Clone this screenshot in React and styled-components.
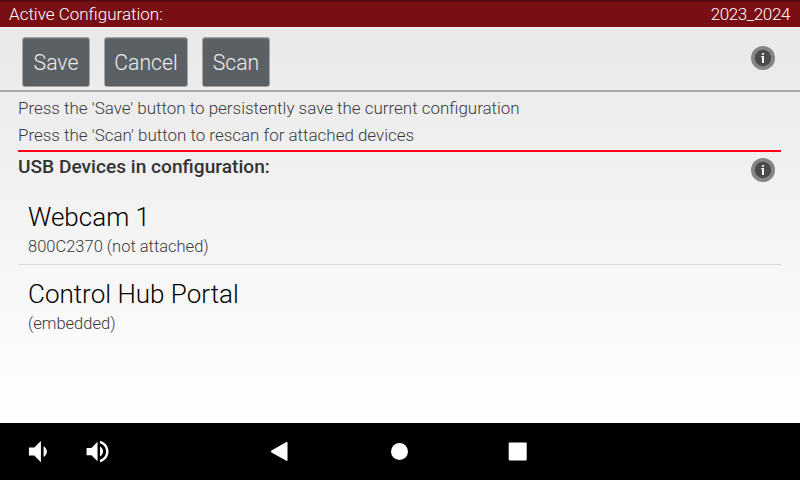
import React from "react";
import styled, { createGlobalStyle } from "styled-components";

const GlobalStyle = createGlobalStyle`
  * { box-sizing: border-box; }
  body { margin: 0; background: #000; }
  p, h1, h2, ul { margin: 0; padding: 0; font-weight: 300; }
`;

const Screen = styled.div`
  width: 800px;
  height: 480px;
  display: flex;
  flex-direction: column;
  overflow: hidden;
  font-family: Roboto, "Noto Sans", sans-serif;
  font-weight: 300;
  background: linear-gradient(#e7e7e7, #ffffff 423px);
`;

const Header = styled.header`
  height: 27px;
  flex: none;
  display: flex;
  justify-content: space-between;
  padding: 0 10px 0 9px;
  font-size: 17px;
  line-height: 28px;
  color: #fff;
  background: linear-gradient(#4d090e, #790e15 3px);
`;

const ConfigName = styled.span`
  letter-spacing: -0.38px;
`;

const Toolbar = styled.div`
  height: 65px;
  flex: none;
  display: flex;
  align-items: flex-start;
  gap: 14px;
  padding: 10px 25px 0 22px;
  border-bottom: 2px solid #a9a9a9;
`;

const Button = styled.button`
  width: ${(p) => p.$width}px;
  height: 50px;
  padding: 0;
  border: 1px solid #a4a6a7;
  border-radius: 3px;
  background: #5b6064;
  box-shadow: inset 0 1px #73787b, inset 0 -1px #54595c;
  color: #ececec;
  font: 300 21.2px Roboto, sans-serif;
`;

const InfoButton = styled.button`
  width: 24px;
  height: 24px;
  flex: none;
  margin: ${(p) => p.$top}px 0 0 auto;
  padding: 0;
  border: 0;
  background: none;
  svg { display: block; }
`;

const Content = styled.main`
  flex: 1;
  padding: 3px 19px 0 18px;
`;

const Hint = styled.p`
  height: 27px;
  font-size: 16.97px;
  line-height: 27px;
  color: #3a3a3a;
`;

const Section = styled.div`
  display: flex;
  margin-top: 1px;
  padding-right: 6px;
  border-top: 2px solid #ff0014;
`;

const SectionTitle = styled.h2`
  font-size: 19.15px;
  font-weight: 500;
  line-height: 30px;
  color: #333;
`;

const Devices = styled.ul`
  list-style: none;
  padding-top: 6px;
`;

const Device = styled.li`
  height: 76px;
  padding: 13px 10px 0;
  & + & { border-top: 1px solid #dadada; }
`;

const DeviceName = styled.div`
  font-size: 26px;
  line-height: 32px;
  color: #000;
`;

const DeviceDetail = styled.div`
  font-size: 16.5px;
  line-height: 28px;
  color: #3a3a3a;
`;

const NavBar = styled.nav`
  height: 57px;
  flex: none;
  display: flex;
  padding-left: 22px;
  background: #000;
`;

const NavButton = styled.button`
  width: ${(p) => p.$width}px;
  height: 57px;
  padding: 0;
  border: 0;
  background: none;
  svg { display: block; fill: #fff; }
`;

const Info = ({ top }) => (
  <InfoButton $top={top} aria-label="Info">
    <svg width="24" height="24" viewBox="0 0 24 24">
      <circle cx="12" cy="12" r="12" fill="#858585" />
      <circle cx="12" cy="12" r="8.2" fill="#4a4a4a" />
      <path d="M11 7h2v1.8h-2zM10.3 10h2.7v7h-2v-5.6h-.7z" fill="#fff" />
    </svg>
  </InfoButton>
);

const buttons = [["Save", 68], ["Cancel", 84], ["Scan", 68]];
const devices = [
  ["Webcam 1", "800C2370 (not attached)"],
  ["Control Hub Portal", "(embedded)"],
];

const NavItem = ({ label, width, children }) => (
  <NavButton $width={width} aria-label={label}>
    <svg width="40" height="57" viewBox="0 0 40 57">{children}</svg>
  </NavButton>
);

export default function App() {
  return (
    <>
      <GlobalStyle />
      <Screen>
        <Header>
          <span>Active Configuration:</span>
          <ConfigName>2023_2024</ConfigName>
        </Header>
        <Toolbar>
          {buttons.map(([label, width]) => (
            <Button key={label} $width={width}>{label}</Button>
          ))}
          <Info top={9} />
        </Toolbar>
        <Content>
          <Hint>Press the 'Save' button to persistently save the current configuration</Hint>
          <Hint>Press the 'Scan' button to rescan for attached devices</Hint>
          <Section>
            <SectionTitle>USB Devices in configuration:</SectionTitle>
            <Info top={6} />
          </Section>
          <Devices>
            {devices.map(([name, detail]) => (
              <Device key={name}>
                <DeviceName>{name}</DeviceName>
                <DeviceDetail>{detail}</DeviceDetail>
              </Device>
            ))}
          </Devices>
        </Content>
        <NavBar>
          <NavItem label="Volume down" width={59}>
            <path transform="translate(.3 12.6) scale(1.33)" d="M18.5 12c0-1.77-1.02-3.29-2.5-4.03v8.05c1.48-.73 2.5-2.25 2.5-4.02zM5 9v6h4l5 5V4L9 9H5z" />
          </NavItem>
          <NavItem label="Volume up" width={184}>
            <path transform="translate(1.9 13.9) scale(1.22)" d="M3 9v6h4l5 5V4L7 9H3zm13.5 3c0-1.77-1.02-3.29-2.5-4.03v8.05c1.48-.73 2.5-2.25 2.5-4.02z" />
            <path transform="translate(1.9 13.9) scale(1.22)" d="M14 3.23v2.06c2.89.86 5 3.54 5 6.71s-2.11 5.85-5 6.71v2.06c4.01-.91 7-4.49 7-8.77s-2.99-7.86-7-8.77z" />
          </NavItem>
          <NavItem label="Back" width={120}>
            <path d="M6.5 27.4 21.4 19.1Q22.5 18.6 22.5 20V37Q22.5 38.4 21.4 37.7L6.5 29.6Q5 28.5 6.5 27.4Z" />
          </NavItem>
          <NavItem label="Home" width={117}>
            <circle cx="14.5" cy="28.5" r="8.5" />
          </NavItem>
          <NavItem label="Recent apps" width={40}>
            <rect x="6.7" y="19.5" width="18" height="18" rx="1" />
          </NavItem>
        </NavBar>
      </Screen>
    </>
  );
}
